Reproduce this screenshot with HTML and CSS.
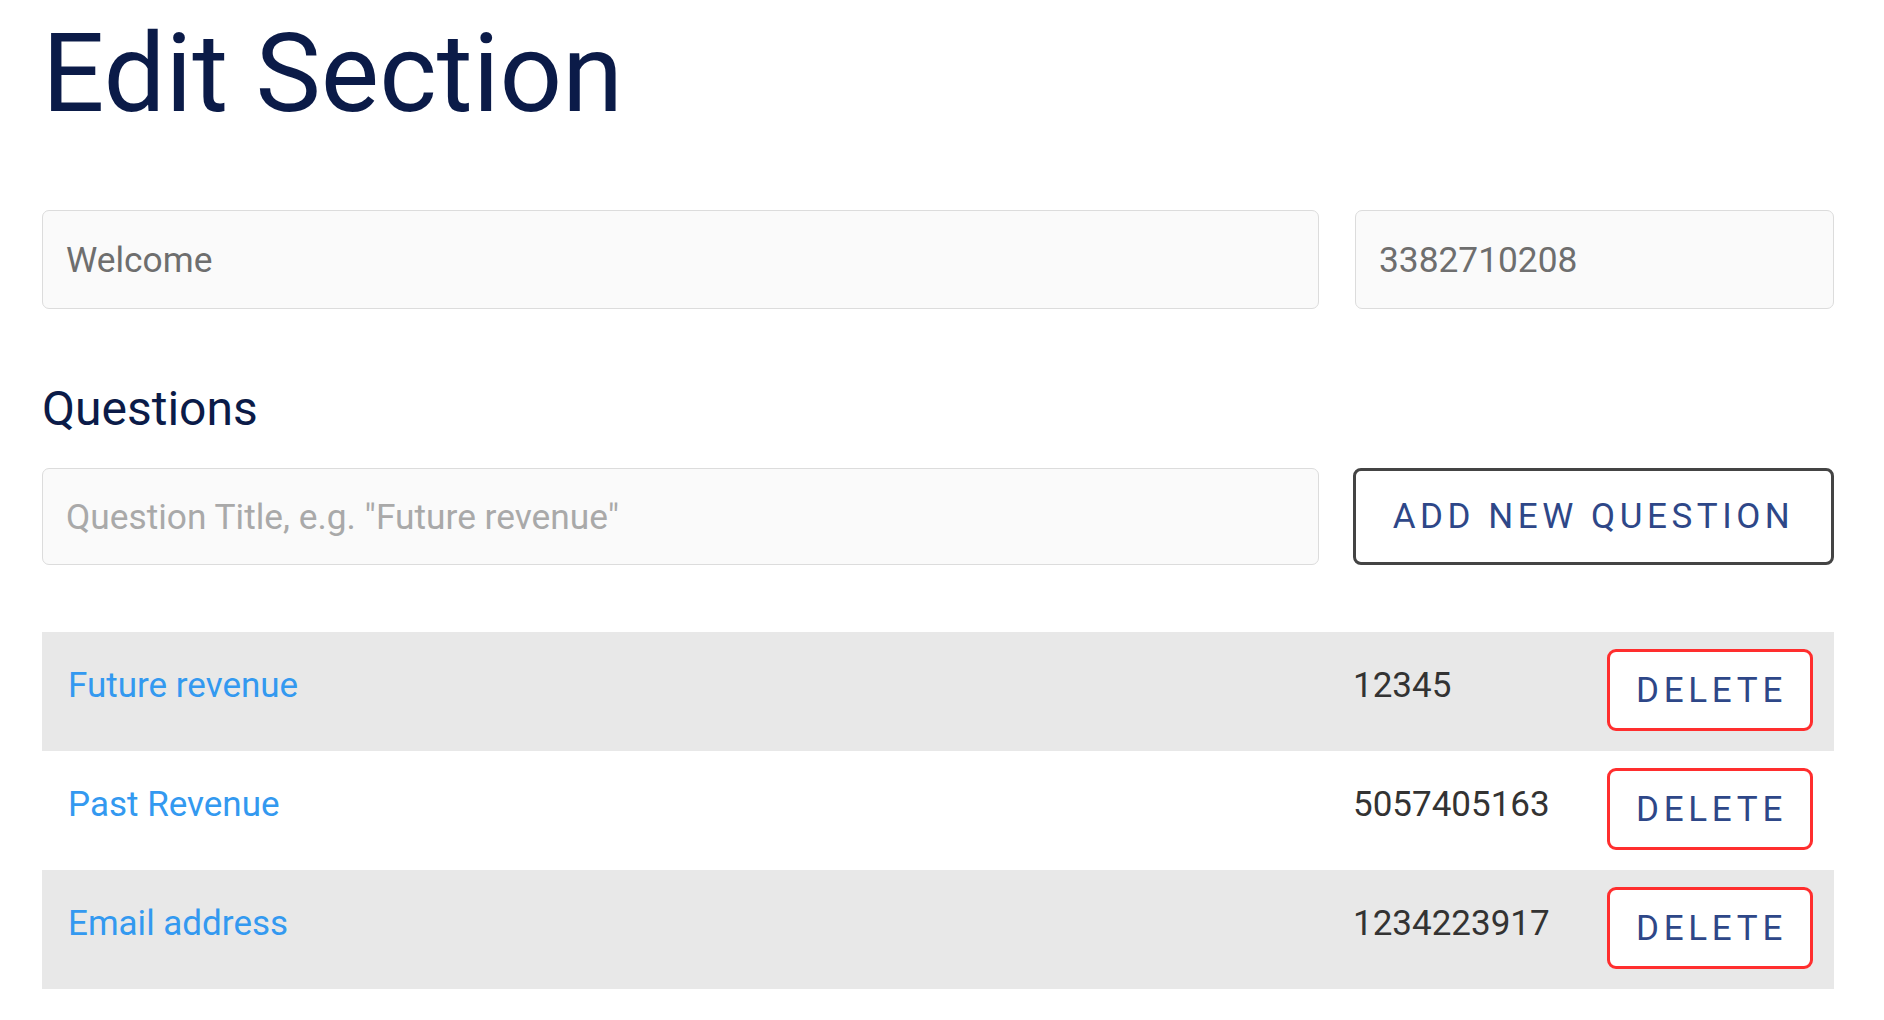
FILE: index.html
```html
<!DOCTYPE html>
<html lang="en">
<head>
<meta charset="utf-8">
<title>Edit Section</title>
<link rel="stylesheet" href="styles.css">
</head>
<body>
<main class="page">
  <h1 class="title">Edit Section</h1>
  <div class="grid-row top-row">
    <input class="field" type="text" value="Welcome">
    <input class="field" type="text" value="3382710208">
  </div>
  <h2 class="subtitle">Questions</h2>
  <div class="grid-row add-row">
    <input class="field field-q" type="text" placeholder="Question Title, e.g. &quot;Future revenue&quot;">
    <button class="btn-add" type="button">ADD NEW QUESTION</button>
  </div>
  <div class="list">
    <div class="q-row shaded">
      <a class="q-name" href="#">Future revenue</a>
      <div class="q-side">
        <span class="q-id">12345</span>
        <button class="btn-delete" type="button">DELETE</button>
      </div>
    </div>
    <div class="q-row">
      <a class="q-name" href="#">Past Revenue</a>
      <div class="q-side">
        <span class="q-id">5057405163</span>
        <button class="btn-delete" type="button">DELETE</button>
      </div>
    </div>
    <div class="q-row shaded">
      <a class="q-name" href="#">Email address</a>
      <div class="q-side">
        <span class="q-id">1234223917</span>
        <button class="btn-delete" type="button">DELETE</button>
      </div>
    </div>
  </div>
</main>
</body>
</html>
```

FILE: styles.css
```css
* { box-sizing: border-box; }

html, body {
  margin: 0;
  background: #ffffff;
}

body {
  font-family: Roboto, "Liberation Sans", sans-serif;
}

.page {
  padding: 8px 50px 0 42px;
}

.title {
  margin: 0;
  font-size: 110px;
  line-height: 132px;
  font-weight: 400;
  color: #0b1b48;
}

.grid-row {
  display: grid;
  grid-template-columns: 1fr 479px;
  column-gap: 36px;
}

.top-row {
  margin-top: 70px;
  height: 99px;
}

.field {
  width: 100%;
  height: 100%;
  margin: 0;
  border: 1px solid #dcdcdc;
  border-radius: 7px;
  background: #fafafa;
  padding: 0 23px;
  font-family: Roboto, "Liberation Sans", sans-serif;
  font-size: 35.3px;
  color: #6e6e6e;
  outline: none;
}

.field::placeholder {
  color: #a9a9a9;
  opacity: 1;
}

.subtitle {
  margin: 72px 0 0;
  font-size: 48px;
  line-height: 56px;
  font-weight: 400;
  color: #0b1b48;
}

.add-row {
  margin-top: 31px;
  height: 97px;
}

.btn-add {
  margin: 0 0 0 -2px;
  height: 100%;
  border: 3px solid #444444;
  border-radius: 8px;
  background: #ffffff;
  font-family: Roboto, "Liberation Sans", sans-serif;
  font-size: 35px;
  letter-spacing: 0.13em;
  color: #2e4788;
  padding: 0;
  cursor: pointer;
}

.list {
  margin-top: 67px;
}

.q-row {
  display: grid;
  grid-template-columns: 1fr 479px;
  column-gap: 36px;
  align-items: center;
  padding: 17px 0 20px;
}

.q-row.shaded {
  background: #e8e8e8;
}

.q-name {
  padding-left: 26px;
  margin-bottom: 10px;
  font-size: 35px;
  color: #3399f0;
  text-decoration: none;
}

.q-side {
  display: flex;
  align-items: center;
  justify-content: space-between;
  padding-right: 21px;
}

.q-id {
  margin-bottom: 10px;
  margin-left: -2px;
  font-size: 35px;
  color: #333333;
}

.btn-delete {
  width: 206px;
  height: 82px;
  margin: 0;
  padding: 0 0 0 3px;
  border: 3px solid #ff2e2e;
  border-radius: 9px;
  background: #ffffff;
  font-family: Roboto, "Liberation Sans", sans-serif;
  font-size: 35px;
  letter-spacing: 0.135em;
  color: #2e4788;
  cursor: pointer;
}
```
